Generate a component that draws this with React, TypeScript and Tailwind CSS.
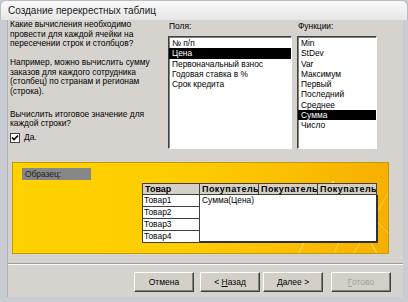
import React from "react";

const fields = ["№ п/п", "Цена", "Первоначальный взнос", "Годовая ставка в %", "Срок кредита"];
const funcs = ["Min", "StDev", "Var", "Максимум", "Первый", "Последний", "Среднее", "Сумма", "Число"];

function ListBox({ items, selected, className }: { items: string[]; selected: string; className: string }) {
  return (
    <div
      className={
        "h-[113px] bg-white border-t border-l border-t-[#404040] border-l-[#404040] border-r border-b border-r-white border-b-white shadow-[inset_1px_1px_0_#808080] pt-[1px] " +
        className
      }
    >
      {items.map((item) => (
        <div
          key={item}
          className={
            "h-[10.3px] leading-[10px] px-[3px] whitespace-nowrap " + (item === selected ? "bg-black text-white" : "text-black")
          }
        >
          {item}
        </div>
      ))}
    </div>
  );
}

function WinButton({ children, disabled }: { children: React.ReactNode; disabled?: boolean }) {
  return (
    <button
      type="button"
      className={
        "w-[60px] h-[20px] bg-[#d4d0c8] border border-t-white border-l-white border-r-[#404040] border-b-[#404040] shadow-[inset_-1px_-1px_0_#808080] text-[8.5px] " +
        (disabled ? "text-[#a0a0a0]" : "text-black")
      }
    >
      {children}
    </button>
  );
}

export default function App() {
  return (
    <div
      className="w-[408px] h-[302px] bg-[#c9ccd2] flex flex-col overflow-hidden text-[8.4px] text-black"
      style={{ fontFamily: '"Liberation Sans", Arial, sans-serif' }}
    >
      {/* title bar */}
      <div className="h-[20px] shrink-0 rounded-t-[6px] bg-gradient-to-b from-[#fafafa] to-[#e6e6e6] border border-[#b8bcc4] border-b-0 flex items-center pl-[7px] text-[10px] text-[#1a1a1a]">
        Создание перекрестных таблиц
      </div>

      <div className="flex-1 flex flex-col bg-[#d6d3ce] ml-[7px] mr-[5px] mb-[5px] border-l border-[#b0b0b0]">
        {/* top area */}
        <div className="flex pl-[2px] h-[141px]">
          <div className="w-[158px] flex flex-col leading-[9.6px]">
            <p>
              Какие вычисления необходимо
              <br />
              провести для каждой ячейки на
              <br />
              пересечении строк и столбцов?
            </p>
            <p className="mt-[9.5px]">
              Например, можно вычислить сумму
              <br />
              заказов для каждого сотрудника
              <br />
              (столбец) по странам и регионам
              <br />
              (строка).
            </p>
            <p className="mt-[13px]">
              Вычислить итоговое значение для
              <br />
              каждой строки?
            </p>
            <div className="flex items-center gap-[4px] mt-[4px]">
              <div className="w-[10px] h-[10px] bg-white border border-[#404040] flex items-center justify-center">
                <svg width="8" height="8" viewBox="0 0 8 8">
                  <path d="M1 3.5 L3 5.5 L7 1.5" stroke="black" strokeWidth="1.6" fill="none" />
                </svg>
              </div>
              <span>
                <span className="underline">Д</span>а.
              </span>
            </div>
          </div>
          <div className="w-[124px] flex flex-col">
            <div className="h-[16px] leading-[10px] pl-[1px] pt-[1px]">Поля:</div>
            <ListBox items={fields} selected="Цена" className="w-[124px]" />
          </div>
          <div className="w-[80px] ml-[5px] flex flex-col">
            <div className="h-[16px] leading-[10px] pl-[1px] pt-[1px]">Функции:</div>
            <ListBox items={funcs} selected="Сумма" className="w-[80px]" />
          </div>
        </div>

        {/* sample panel */}
        <div className="ml-[4px] mt-[1px] w-[377px] h-[92px] border border-[#c09a10] bg-gradient-to-r from-[#ffd200] via-[#ffcb00] to-[#f6b000] relative overflow-hidden pl-[9px] pt-[5px]">
          <svg className="absolute right-0 top-0" width="130" height="92" viewBox="0 0 130 92">
            <path d="M40 92 L75 18 L120 92" stroke="#ffe98a" strokeWidth="1" fill="none" opacity="0.8" />
            <path d="M75 92 L100 40 L130 70" stroke="#ffe98a" strokeWidth="1" fill="none" opacity="0.6" />
            <path d="M95 92 L130 30" stroke="#ffe98a" strokeWidth="1" fill="none" opacity="0.5" />
          </svg>
          <div className="relative w-[69px] h-[12px] bg-[#878787] text-[#1c1c1c] leading-[12px] pl-[3px]">Образец:</div>
          <div className="relative ml-[120px] mt-[3px] w-[236px] flex flex-col">
            <div className="flex h-[12px] font-bold text-[9px]">
              <div className="w-[58px] bg-[#d4d0c8] border border-[#404040] pl-[2px] leading-[10px] overflow-hidden whitespace-nowrap">Товар</div>
              {["Покупатель1", "Покупатель2", "Покупатель3"].map((c) => (
                <div
                  key={c}
                  className="w-[59px] bg-[#d4d0c8] border border-l-0 border-[#404040] pl-[2px] leading-[10px] overflow-hidden whitespace-nowrap tracking-[0.45px]"
                >
                  {c}
                </div>
              ))}
            </div>
            <div className="flex h-[48px]">
              <div className="w-[58px] flex flex-col">
                {["Товар1", "Товар2", "Товар3", "Товар4"].map((t) => (
                  <div key={t} className="h-[12px] bg-white border border-t-0 border-[#404040] pl-[1px] leading-[11px]">
                    {t}
                  </div>
                ))}
              </div>
              <div className="flex-1 bg-white border-b-2 border-r-2 border-[#303030] pl-[2px] leading-[11px]">Сумма(Цена)</div>
            </div>
          </div>
        </div>

        {/* separator */}
        <div className="mt-[9px] border-t border-[#9a9a9a] border-b border-b-white" />

        {/* buttons */}
        <div className="flex mt-[7px] pl-[126px]">
          <WinButton>Отмена</WinButton>
          <div className="ml-[6px]">
            <WinButton>
              &lt; <span className="underline">Н</span>азад
            </WinButton>
          </div>
          <div className="ml-[3px]">
            <WinButton>
              <span className="underline">Д</span>алее &gt;
            </WinButton>
          </div>
          <div className="ml-[8px]">
            <WinButton disabled>
              <span className="underline">Г</span>отово
            </WinButton>
          </div>
        </div>
      </div>
    </div>
  );
}
